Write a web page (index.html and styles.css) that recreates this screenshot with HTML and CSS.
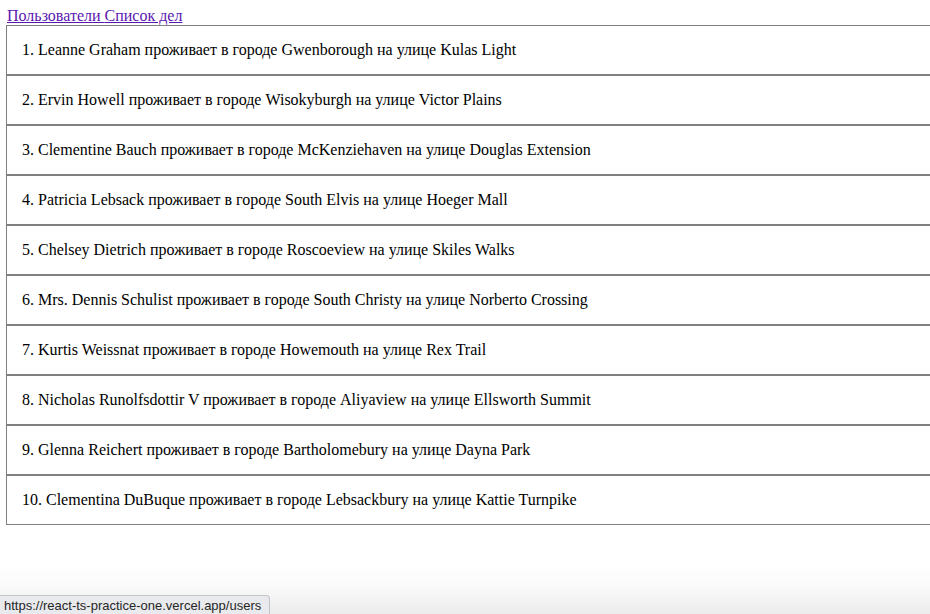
FILE: index.html
```html
<!DOCTYPE html>
<html lang="ru">
<head>
<meta charset="utf-8">
<title>Пользователи</title>
<link rel="stylesheet" href="styles.css">
</head>
<body>
<nav class="nav"><a href="#" class="nav-link">Пользователи </a><a href="#" class="nav-link">Список дел</a></nav>
<div class="list">
  <div class="item">1. Leanne Graham проживает в городе Gwenborough на улице Kulas Light</div>
  <div class="item">2. Ervin Howell проживает в городе Wisokyburgh на улице Victor Plains</div>
  <div class="item">3. Clementine Bauch проживает в городе McKenziehaven на улице Douglas Extension</div>
  <div class="item">4. Patricia Lebsack проживает в городе South Elvis на улице Hoeger Mall</div>
  <div class="item">5. Chelsey Dietrich проживает в городе Roscoeview на улице Skiles Walks</div>
  <div class="item">6. Mrs. Dennis Schulist проживает в городе South Christy на улице Norberto Crossing</div>
  <div class="item">7. Kurtis Weissnat проживает в городе Howemouth на улице Rex Trail</div>
  <div class="item">8. Nicholas Runolfsdottir V проживает в городе Aliyaview на улице Ellsworth Summit</div>
  <div class="item">9. Glenna Reichert проживает в городе Bartholomebury на улице Dayna Park</div>
  <div class="item">10. Clementina DuBuque проживает в городе Lebsackbury на улице Kattie Turnpike</div>
</div>
<div class="fade"></div>
<div class="status">https://react-ts-practice-one.vercel.app/users</div>
</body>
</html>
```

FILE: styles.css
```css
html {
  overflow: hidden;
}
body {
  margin: 0;
  padding: 7px 0 0 6px;
  font-family: "Liberation Serif", "Times New Roman", serif;
  font-size: 16px;
  color: #000;
  background: #fff;
}
.nav {
  height: 18px;
  line-height: 18px;
  padding-left: 1px;
}
.nav-link {
  color: #5a17b0;
  text-decoration: underline;
}
.list {
  width: 1000px;
}
.item {
  border: 1px solid #808080;
  padding: 15px 15px;
  line-height: 18px;
  height: 18px;
  white-space: nowrap;
}
.fade {
  position: fixed;
  left: 0;
  right: 0;
  bottom: 0;
  height: 50px;
  background: linear-gradient(to bottom, rgba(255,255,255,0) 0%, #fbfbfb 40%, #ececec 100%);
  pointer-events: none;
}
.status {
  position: fixed;
  left: 0;
  bottom: 0;
  height: 18px;
  line-height: 19px;
  padding: 0 8px 0 4px;
  background: #e9eaed;
  border: 1px solid #c3c4c7;
  border-left: none;
  border-bottom: none;
  border-top-right-radius: 4px;
  font-family: "Liberation Sans", Arial, sans-serif;
  font-size: 13px;
  color: #262626;
}
```
